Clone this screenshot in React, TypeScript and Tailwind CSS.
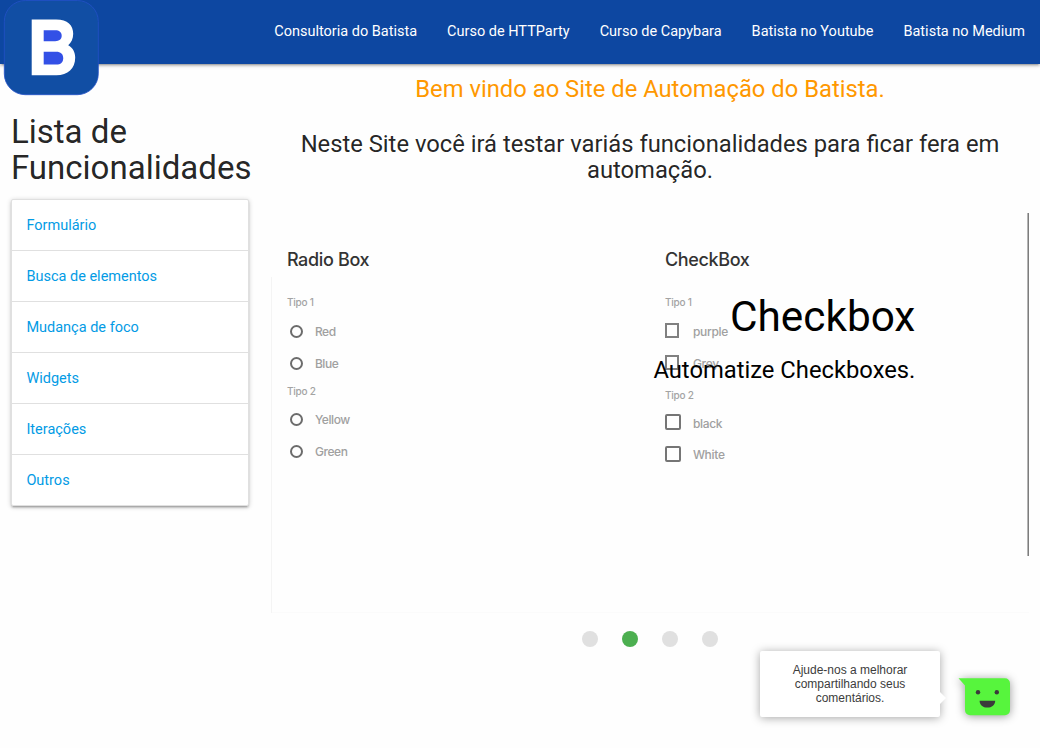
import React from "react";

const navLinks = [
  "Consultoria do Batista",
  "Curso de HTTParty",
  "Curso de Capybara",
  "Batista no Youtube",
  "Batista no Medium",
];

const features = [
  "Formulário",
  "Busca de elementos",
  "Mudança de foco",
  "Widgets",
  "Iterações",
  "Outros",
];

function Logo() {
  return (
    <svg width="96" height="96" viewBox="0 0 96 96" className="block">
      <rect x="1.3" y="0.5" width="94" height="94.2" rx="21" fill="#114ea4" stroke="#2350c8" strokeWidth="0.8" />
      <path
        d="M28.7 19.6h24.5c11.5 0 17 5.800 17 14.200 0 5.200-2 8.800-5 11.400 4.600 2.600 7 6.800 7 12.300 0 11-7.400 17.700-18.800 17.700H28.700z"
        fill="#fff"
      />
      <path d="M40.700 30.300h11.500c4 0 6.500 2 6.500 5.500s-2.500 5.400-6.500 5.400H40.700z" fill="#3350e6" />
      <path d="M40.700 51.800h12.500c4.500 0 7 2.300 7 6.500s-2.500 6.300-7 6.300H40.700z" fill="#3350e6" />
    </svg>
  );
}

function Radio({ label, className }: { label: string; className: string }) {
  return (
    <div className={`flex items-center ${className}`}>
      <span className="ml-[3px] mr-3 h-[13px] w-[13px] rounded-full border-2 border-[#6c6c6c]" />
      <span className="pt-px text-[12px] font-medium tracking-[-0.4px] text-[#a0a0a0]">{label}</span>
    </div>
  );
}

function Check({ label, className, large }: { label: string; className: string; large?: boolean }) {
  return (
    <div className={`flex items-center ${className}`}>
      <span className="flex w-7 shrink-0">
        <span
          className={
            large
              ? "h-4 w-4 rounded-[2px] border-2 border-[#757575]"
              : "mb-px h-[15px] w-[14px] border-2 border-[#808080]"
          }
        />
      </span>
      <span className="pt-[3px] text-[12px] font-medium tracking-[-0.3px] text-[#a0a0a0]">{label}</span>
    </div>
  );
}

function Slide() {
  return (
    <div className="relative h-[400px] overflow-hidden font-['Inter','Liberation_Sans',sans-serif]">
      <div className="grid h-full grid-cols-[378px_1fr] border-b border-[#fbfbfb] pl-4">
        <div className="pt-[33px]">
          <h3 className="h-[28px] text-[18px] font-medium leading-[28px] tracking-[-0.35px] text-[#333]">Radio Box</h3>
          <p className="mt-[18px] h-5 text-[10px] font-medium leading-5 tracking-[-0.2px] text-[#a3a3a3]">Tipo 1</p>
          <Radio label="Red" className="mt-1 h-8" />
          <Radio label="Blue" className="h-8" />
          <p className="mt-[1px] h-5 text-[10px] font-medium leading-5 tracking-[-0.2px] text-[#a3a3a3]">Tipo 2</p>
          <Radio label="Yellow" className="mt-[3px] h-8" />
          <Radio label="Green" className="h-[31px]" />
        </div>
        <div className="pt-[33px]">
          <h3 className="h-[28px] text-[18px] font-medium leading-[28px] tracking-[-0.35px] text-[#333]">CheckBox</h3>
          <p className="mt-[18px] h-5 text-[10px] font-medium leading-5 tracking-[-0.2px] text-[#a3a3a3]">Tipo 1</p>
          <Check label="purple" className="mt-[3px] h-8" />
          <Check label="Grey" className="h-8" />
          <p className="mt-[6px] h-5 text-[10px] font-medium leading-5 tracking-[-0.2px] text-[#a3a3a3]">Tipo 2</p>
          <Check label="black" className="mt-[2px] h-[31px]" large />
          <Check label="White" className="h-8" large />
        </div>
      </div>
      <div className="absolute bottom-0 left-0 top-16 w-px bg-[#f4f4f4]" />
      <div className="absolute right-0 top-0 flex h-[343px] w-[2px]">
        <div className="w-px bg-[#b5b5b5]" />
        <div className="w-px bg-[#7d7d7d]" />
      </div>
      <div className="absolute left-[15%] top-[15%] w-[70%] pt-[21px] text-right font-['Roboto',sans-serif] text-black">
        <h3 className="text-[42.340px] leading-[46.500px]">Checkbox</h3>
        <h5 className="mt-[17px] text-[23.780px] leading-[26.200px]">Automatize Checkboxes.</h5>
      </div>
    </div>
  );
}

function Feedback() {
  return (
    <div className="absolute left-[760px] top-[651px] flex">
      <div className="relative flex h-[66px] w-[180px] items-center justify-center rounded-[2px] bg-white px-5 text-center font-['Liberation_Sans',sans-serif] text-[12px] leading-[14px] text-[#3c3c3c] shadow-[0_1px_10px_rgba(0,0,0,0.35)]">
        <p>
          Ajude-nos a melhorar
          <br />
          compartilhando seus
          <br />
          comentários.
        </p>
        <svg className="absolute left-full top-[41px]" width="6" height="12" viewBox="0 0 6 12">
          <path d="M0 0l6 6-6 6z" fill="#fff" />
        </svg>
      </div>
      <svg
        className="ml-[18px] mt-[26px] overflow-visible drop-shadow-[0_1px_5px_rgba(0,0,0,0.4)]"
        width="53"
        height="40"
        viewBox="0 0 53 40"
      >
        <path d="M0.500 1.200H47a5 5 0 0 1 5 5V33.300a5 5 0 0 1-5 5H12a5 5 0 0 1-5-5V8.500z" fill="#57f53d" />
        <circle cx="20" cy="15.200" r="2.200" fill="#3b3b3b" />
        <circle cx="38.800" cy="15.200" r="2.200" fill="#3b3b3b" />
        <path d="M21.600 23.700h15.600c0 4-3.300 6.900-7.800 6.900s-7.800-2.900-7.800-6.900z" fill="#3b3b3b" />
      </svg>
    </div>
  );
}

export default function App() {
  return (
    <div className="relative h-[748px] w-[1040px] overflow-hidden bg-[#fefefe] font-['Roboto',sans-serif] text-[14.500px] leading-[1.5] text-[rgba(0,0,0,0.87)]">
      <nav className="flex h-16 items-start justify-between bg-[#0d47a1] text-white shadow-[0_2px_2px_0_rgba(0,0,0,0.14),0_3px_1px_-2px_rgba(0,0,0,0.12),0_1px_5px_0_rgba(0,0,0,0.2)]">
        <a className="relative z-10 ml-[3px] block">
          <Logo />
        </a>
        <ul className="flex">
          {navLinks.map((link) => (
            <li key={link} className="px-[15px] leading-[63px]">
              {link}
            </li>
          ))}
        </ul>
      </nav>
      <div className="flex">
        <aside className="w-[260px] px-[10.875px] pt-[50px]">
          <h4 className="text-[33.060px] leading-[36.366px]">Lista de Funcionalidades</h4>
          <ul className="mt-[12px] rounded-[2px] border border-[#e0e0e0] bg-white shadow-[0_2px_2px_0_rgba(0,0,0,0.14),0_3px_1px_-2px_rgba(0,0,0,0.12),0_1px_5px_0_rgba(0,0,0,0.2)]">
            {features.map((item) => (
              <li
                key={item}
                className="h-[51px] border-b border-[#e0e0e0] px-[14.500px] pt-px leading-[50px] text-[#039be5] last:h-[50px] last:border-b-0"
              >
                {item}
              </li>
            ))}
          </ul>
        </aside>
        <main className="w-[780px] px-[10.875px] pt-3">
          <div className="text-center text-[23.780px] leading-[26.158px]">
            <h5 className="text-[#ff9800]">Bem vindo ao Site de Automação do Batista.</h5>
            <h5 className="mt-[29px]">Neste Site você irá testar variás funcionalidades para ficar fera em automação.</h5>
          </div>
          <div className="mt-[29.500px]">
            <Slide />
            <ul className="mt-[18px] flex justify-center gap-6">
              <li className="h-4 w-4 rounded-full bg-[#e0e0e0]" />
              <li className="h-4 w-4 rounded-full bg-[#4caf50]" />
              <li className="h-4 w-4 rounded-full bg-[#e0e0e0]" />
              <li className="h-4 w-4 rounded-full bg-[#e0e0e0]" />
            </ul>
          </div>
        </main>
      </div>
      <Feedback />
    </div>
  );
}
